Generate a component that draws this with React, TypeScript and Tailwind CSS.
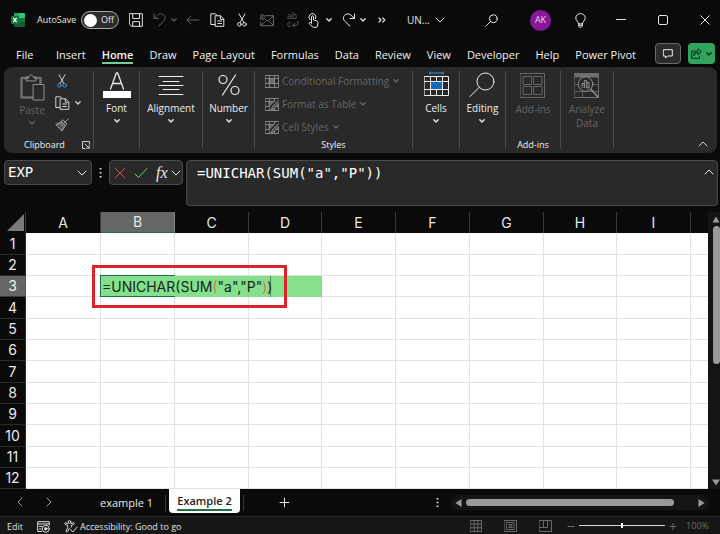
import React from "react";

type IconProps = {
  w: number;
  h: number;
  className?: string;
  sw?: number;
  children: React.ReactNode;
};

function Icon({ w, h, className = "", sw = 1, children }: IconProps) {
  return (
    <svg
      width={w}
      height={h}
      viewBox={`0 0 ${w} ${h}`}
      fill="none"
      stroke="currentColor"
      strokeWidth={sw}
      strokeLinecap="round"
      strokeLinejoin="round"
      aria-hidden="true"
      className={`shrink-0 ${className}`}
    >
      {children}
    </svg>
  );
}

const ChevronSmall = ({ className = "" }: { className?: string }) => (
  <Icon w={6} h={4} sw={1.3} className={className}>
    <path d="M0.8 0.8L3 3L5.2 0.8" />
  </Icon>
);

const ChevronLarge = ({ className = "" }: { className?: string }) => (
  <Icon w={10} h={6} className={className}>
    <path d="M1 1L5 5L9 1" />
  </Icon>
);

const ChevronUp = () => (
  <Icon w={10} h={6}>
    <path d="M1 5L5 1L9 5" />
  </Icon>
);

const ExcelLogo = () => (
  <svg width="14" height="14" viewBox="0 0 14 14" className="shrink-0" aria-hidden="true">
    <rect x="3" y="0" width="11" height="14" rx="1" fill="#185c37" />
    <rect x="3" y="0" width="6" height="5" fill="#21a366" />
    <rect x="8" y="0" width="6" height="5" rx="1" fill="#33c481" />
    <rect x="8" y="5" width="6" height="4" fill="#107c41" />
    <rect x="0" y="3" width="8" height="8" rx="1" fill="#0f7a3f" />
    <path d="M2.3 4.8L5.7 9.2M5.7 4.8L2.3 9.2" stroke="#fff" strokeWidth="1.3" />
  </svg>
);

const CopyIcon = () => (
  <Icon w={15} h={14}>
    <path d="M5 11.5H0.8V0.8H5.5L7 2.3" />
    <path d="M5.5 2.8H10.5L13.8 6V13.3H5.5Z" />
    <path d="M10.3 3V6.3H13.5M7.8 8H11.5M7.8 10.5H11.5" />
  </Icon>
);

const Scissors = ({ ring = "currentColor" }: { ring?: string }) => (
  <Icon w={10} h={14}>
    <path d="M2 0.8L7 9.7M8 0.8L3 9.7" />
    <circle cx="2.4" cy="11.3" r="1.8" stroke={ring} />
    <circle cx="7.6" cy="11.3" r="1.8" stroke={ring} />
  </Icon>
);

function TitleBar() {
  return (
    <header className="flex h-10 items-center justify-between pl-[11px] text-[#e6e6e6]">
      <div className="flex items-center">
        <ExcelLogo />
        <label htmlFor="autosave" className="ml-3 w-[44px] whitespace-nowrap text-[9px]">
          AutoSave
        </label>
        <span className="relative flex h-[18px] w-[38px] items-center rounded-full border border-[#a8a8a8] bg-[#2b2b2b] pl-[2px]">
          <input
            id="autosave"
            type="checkbox"
            role="switch"
            className="absolute inset-0 m-0 h-full w-full cursor-pointer appearance-none"
          />
          <span className="h-[13px] w-[13px] rounded-full bg-white" />
          <span className="ml-1 text-[9px]">Off</span>
        </span>
        <button type="button" aria-label="Save" className="ml-[10px]">
          <Icon w={14} h={14}>
            <path d="M0.7 0.7H13.3V13.3H2.7L0.7 11.5Z" />
            <path d="M3.7 0.7V5.5H10.5V0.7M3.7 13.3V8.7H10.5V13.3" />
          </Icon>
        </button>
        <button type="button" aria-label="Undo" className="ml-[10px] flex items-center gap-1 text-[#5c5c5c]">
          <Icon w={14} h={14}>
            <path d="M1 1V5.5H5.5M1.2 5.3L4.5 2.2C6.8 0 10.6 0.7 11.7 3.4C12.5 5.2 12 7 10.7 8.2L5.5 13.2" />
          </Icon>
          <ChevronSmall />
        </button>
        <button type="button" aria-label="Back" className="ml-[9px] text-[#5c5c5c]">
          <Icon w={14} h={10}>
            <path d="M13 5H1M5 1L1 5L5 9" />
          </Icon>
        </button>
        <button type="button" aria-label="Copy" className="ml-[10px]">
          <CopyIcon />
        </button>
        <button type="button" aria-label="Cut" className="ml-3">
          <Scissors />
        </button>
        <button type="button" aria-label="Email" className="ml-[13px] text-[#6a6a6a]">
          <Icon w={14} h={13}>
            <path d="M5.5 1.7H13.4V11.7H0.7V8" />
            <path d="M0.9 11.5L5 8M13.2 2L8 7L5.5 5.7M13.3 11.5L9.5 7.5" />
            <path d="M0.7 5.5V2.3A1.7 1.7 0 0 1 4.1 2.3V5A1 1 0 0 1 2.2 5V2.7" />
          </Icon>
        </button>
        <button
          type="button"
          aria-label="Replace"
          className="ml-[13px] flex w-[12px] flex-col text-left font-['Liberation_Sans',sans-serif] text-[9px] leading-[9px] text-[#5c5c5c]"
        >
          <span className="h-2">ab</span>
          <span className="flex items-center">
            c
            <Icon w={7} h={7}>
              <path d="M5.8 0.5V2.5C5.8 3.8 5 4.3 4 4.3H1M2.7 2.4L0.8 4.3L2.7 6.2" />
            </Icon>
          </span>
        </button>
        <button type="button" aria-label="Touch mode" className="ml-[9px] flex items-center gap-[7px]">
          <Icon w={11} h={15}>
            <path d="M2 6.6A3.5 3.5 0 1 1 7.6 5.6" />
            <path d="M3.5 10V3.8A1 1 0 0 1 5.5 3.8V7L9 8C10 8.3 10.2 8.8 10 9.8L9.4 13.2C9.2 14 8.8 14.3 8 14.3H5.6C4.6 14.3 4.3 13.8 3.7 13L1 10.3C1.3 9.2 2.5 9.2 3.5 10Z" />
          </Icon>
          <ChevronSmall />
        </button>
        <button type="button" aria-label="Redo" className="ml-[10px] flex items-center gap-1">
          <Icon w={14} h={14}>
            <path d="M12.5 1V5.5H8M12.3 5.3L9 2.2C6.7 0 2.9 0.7 1.8 3.4C1 5.2 1.5 7 2.8 8.2L8 13.2" />
          </Icon>
          <ChevronSmall />
        </button>
        <button type="button" aria-label="Customize toolbar" className="ml-3">
          <Icon w={8} h={6} sw={1.2}>
            <path d="M1 1L3 3L1 5M4.8 1L6.8 3L4.8 5" />
          </Icon>
        </button>
        <button type="button" className="ml-[21px] flex items-center gap-[5px] text-[10px]">
          UN...
          <ChevronLarge />
        </button>
      </div>
      <div className="flex items-center pr-[10px]">
        <button type="button" aria-label="Search">
          <Icon w={13} h={13}>
            <circle cx="8.3" cy="4.7" r="3.9" />
            <path d="M5.5 7.5L0.8 12.2" />
          </Icon>
        </button>
        <button
          type="button"
          className="ml-8 h-[21px] w-[21px] rounded-full bg-[#881798] text-center text-[9px] text-[#ecd5ee]"
        >
          AK
        </button>
        <button type="button" aria-label="Tips" className="ml-6">
          <Icon w={11} h={15}>
            <path d="M3.5 10.5C3.5 8.5 0.8 7.8 0.8 5A4.6 4.3 0 0 1 10.2 5C10.2 7.8 7.5 8.5 7.5 10.5ZM3.6 12.2H7.4M3.8 10.5V13.2L4.6 14.2H6.4L7.2 13.2V10.5" />
          </Icon>
        </button>
        <button type="button" aria-label="Minimize" className="ml-[30px]">
          <Icon w={10} h={10}>
            <path d="M0.5 4.5H9.5" />
          </Icon>
        </button>
        <button type="button" aria-label="Maximize" className="ml-8">
          <Icon w={10} h={10}>
            <rect x="0.5" y="0.5" width="9" height="9" rx="1.5" />
          </Icon>
        </button>
        <button type="button" aria-label="Close" className="ml-8">
          <Icon w={10} h={10}>
            <path d="M0.7 0.7L9.3 9.3M9.3 0.7L0.7 9.3" />
          </Icon>
        </button>
      </div>
    </header>
  );
}

const ribbonTabs = [
  "Insert",
  "Home",
  "Draw",
  "Page Layout",
  "Formulas",
  "Data",
  "Review",
  "View",
  "Developer",
  "Help",
  "Power Pivot",
];

function RibbonTabs() {
  return (
    <nav className="flex h-[27px] items-start justify-between pl-4 pr-[5px] text-[11px] text-[#f0f0f0]">
      <div className="flex pt-[6px]">
        <button type="button" className="flex h-[18px] w-10 items-center">
          File
        </button>
        <div className="flex w-[580px] justify-between">
          {ribbonTabs.map((t) =>
            t === "Home" ? (
              <button
                key={t}
                type="button"
                className="flex h-[18px] items-center border-b-2 border-[#6fcf97] pt-[2px] font-semibold"
              >
                {t}
              </button>
            ) : (
              <button key={t} type="button" className="flex h-[18px] items-center whitespace-nowrap">
                {t}
              </button>
            ),
          )}
        </div>
      </div>
      <div className="flex gap-[7px] pt-[3px]">
        <button
          type="button"
          aria-label="Comments"
          className="flex h-[21px] w-[26px] items-center justify-center rounded border border-[#6b6b6b] bg-[#2b2b2b]"
        >
          <Icon w={10} h={10}>
            <path d="M0.7 0.7H9.3V7H4.5L2.5 9V7H0.7Z" />
          </Icon>
        </button>
        <button
          type="button"
          aria-label="Share"
          className="flex h-[21px] w-[27px] items-center justify-center gap-1 rounded bg-[#33a45f] text-[#0b2e1a]"
        >
          <Icon w={11} h={11}>
            <path d="M3.5 3H0.7V10.3H8.5V8" />
            <path d="M2.8 7.5C3 5.5 4.5 4.6 7 4.6V6.8L10.3 3.6L7 0.8V2.8C4.3 3 2.8 4.5 2.8 7.5Z" />
          </Icon>
          <ChevronSmall />
        </button>
      </div>
    </nav>
  );
}

function Group({ width, children, label }: { width: string; children: React.ReactNode; label?: string }) {
  return (
    <section className={`flex shrink-0 flex-col items-center border-r border-[#4a4a4a] ${width}`}>
      {children}
      {label && <span className="mt-auto text-[9px] leading-[9px] text-[#f0f0f0]">{label}</span>}
    </section>
  );
}

function BigButton({
  icon,
  label,
  dim,
  chevron = true,
}: {
  icon: React.ReactNode;
  label: React.ReactNode;
  dim?: boolean;
  chevron?: boolean;
}) {
  return (
    <button type="button" className={`flex flex-col items-center ${dim ? "text-[#666666]" : "text-[#ededed]"}`}>
      <span className="flex h-7 items-center">{icon}</span>
      <span className={`text-[10px] leading-[14px] ${dim ? "pt-[3px]" : "pt-[2px]"}`}>{label}</span>
      {chevron && <ChevronSmall className="mt-1" />}
    </button>
  );
}

const PasteIcon = () => (
  <Icon w={25} h={27} className="text-[#8f8f8f]">
    <path d="M8 4H1.5V23.5H12" strokeWidth="2.4" stroke="#6e6e6e" />
    <path d="M15 4H20.5V9" strokeWidth="2.4" stroke="#6e6e6e" />
    <path d="M6 6.5V3H9C9 0.3 13 0.3 13 3H16V6.5Z" />
    <rect x="13.5" y="10.5" width="10.5" height="15.5" fill="#292929" />
  </Icon>
);

const BrushIcon = () => (
  <Icon w={14} h={14} className="text-[#a0a0a0]">
    <path d="M13.2 0.8L9.5 4.5M6.5 3.5L10.5 7.5L12 6L8 2Z" />
    <path d="M6.3 3.8L0.8 6.5L7 13L10.3 7.7Z" fill="#6a6a6a" />
    <path d="M3 8.7L5 7.5M5 10.8L7 9" stroke="#292929" />
  </Icon>
);

function StyleIcon({ brush }: { brush?: boolean }) {
  return (
    <Icon w={14} h={13} className="text-[#858585]">
      <rect x="0.5" y="0.5" width="13" height="12" />
      <path d="M0.5 3.5H13.5M0.5 8.5H13.5M4.5 0.5V12.5M9.5 0.5V12.5" />
      <rect x="4.5" y="3.5" width="5" height="5" fill="#6e6e6e" />
      {brush && (
        <>
          <path d="M13 3L6.5 9.5" stroke="#292929" strokeWidth="4" />
          <path d="M13.2 2.7L7.5 8.7L6 12.3L9.5 10.7L13.5 6" fill="#555" />
        </>
      )}
    </Icon>
  );
}

function Ribbon() {
  return (
    <div className="mx-1 mr-[3px] flex h-[86px] rounded-lg bg-[#292929] py-1">
      <Group width="w-[90px]">
        <div className="flex w-full">
          <button type="button" className="ml-4 mt-[3px] flex w-6 flex-col items-center text-[#666666]">
            <PasteIcon />
            <span className="pt-[2px] text-[10px] leading-[14px]">Paste</span>
            <ChevronSmall className="mt-1" />
          </button>
          <div className="ml-[11px] flex flex-col gap-2 pt-[3px] text-[#d0d0d0]">
            <button type="button" aria-label="Cut" className="ml-[2px] w-[10px]">
              <Scissors ring="#3a96dd" />
            </button>
            <button type="button" aria-label="Copy" className="flex items-center gap-[5px]">
              <CopyIcon />
              <ChevronSmall />
            </button>
            <button type="button" aria-label="Format Painter" className="w-[14px]">
              <BrushIcon />
            </button>
          </div>
        </div>
        <div className="mt-auto flex w-full items-center justify-between pl-5 pr-[3px]">
          <span className="text-[9px] leading-[9px] text-[#f0f0f0]">Clipboard</span>
          <button type="button" aria-label="Clipboard options" className="text-[#d0d0d0]">
            <Icon w={8} h={8}>
              <path d="M7.5 3V0.5H0.5V7.5H3M3 3L7 7M7.2 4.5V7.2H4.5" />
            </Icon>
          </button>
        </div>
      </Group>
      <Group width="w-[46px]">
        <BigButton
          label="Font"
          icon={
            <Icon w={28} h={28}>
              <path d="M7.5 18L13.3 2H14.7L20.5 18M9.5 12.5H18.5" strokeWidth="1.3" />
              <rect x="0" y="20" width="28" height="7" fill="#fff" stroke="none" />
            </Icon>
          }
        />
      </Group>
      <Group width="w-[63px]">
        <BigButton
          label="Alignment"
          icon={
            <Icon w={26} h={28}>
              <path d="M1 5.5H25M5 10.5H21M1 14.5H25M5 18.5H21M1 23.5H25" />
            </Icon>
          }
        />
      </Group>
      <Group width="w-[52px]">
        <BigButton
          label="Number"
          icon={
            <Icon w={24} h={28} sw={1.2}>
              <circle cx="6" cy="8.5" r="4" />
              <circle cx="18" cy="19.5" r="4" />
              <path d="M18.5 4L5.5 24" />
            </Icon>
          }
        />
      </Group>
      <Group width="w-[158px]" label="Styles">
        <div className="flex w-full flex-col gap-[7px] pl-[10px] pt-[2px] text-[10px] text-[#666666]">
          {["Conditional Formatting", "Format as Table", "Cell Styles"].map((s, i) => (
            <button key={s} type="button" className="flex h-4 items-center whitespace-nowrap leading-4">
              <StyleIcon brush={i > 0} />
              <span className="ml-[3px] mr-1">{s}</span>
              <ChevronSmall />
            </button>
          ))}
        </div>
      </Group>
      <Group width="w-[47px]">
        <BigButton
          label="Cells"
          icon={
            <Icon w={25} h={28}>
              <path d="M6 2H19M6 0.8V3.2M19 0.8V3.2" stroke="#3a96dd" />
              <rect x="0.5" y="5.5" width="24" height="19" />
              <path d="M0.5 10.5H24.5M0.5 18.5H24.5M6.5 5.5V24.5M18.5 5.5V24.5M12.5 5.5V10M12.5 19V24.5" />
              <rect x="7" y="11" width="11" height="7" fill="#0f6cbd" stroke="none" />
            </Icon>
          }
        />
      </Group>
      <Group width="w-[46px]">
        <BigButton
          label="Editing"
          icon={
            <Icon w={28} h={28}>
              <circle cx="17.5" cy="10.5" r="8.5" />
              <path d="M11 16.5L2 25.5" />
            </Icon>
          }
        />
      </Group>
      <Group width="w-[55px]" label="Add-ins">
        <BigButton
          dim
          chevron={false}
          label="Add-ins"
          icon={
            <Icon w={25} h={26}>
              <rect x="0.5" y="1.5" width="24" height="24" />
              <rect x="3.5" y="4.5" width="8" height="8" />
              <rect x="14" y="4.5" width="8" height="8" />
              <rect x="3.5" y="14.5" width="8" height="8" />
              <rect x="14" y="14.5" width="8" height="8" />
            </Icon>
          }
        />
      </Group>
      <Group width="w-[53px]">
        <BigButton
          dim
          chevron={false}
          label={
            <>
              Analyze
              <br />
              Data
            </>
          }
          icon={
            <Icon w={25} h={26} className="text-[#8f8f8f]">
              <rect x="0.5" y="1.5" width="24" height="24" stroke="#6e6e6e" />
              <rect x="0.5" y="1.5" width="24" height="4" fill="#6e6e6e" stroke="none" />
              <path d="M0.5 12.5H24.5M0.5 19.5H24.5M8.5 5.5V25.5" stroke="#5f5f5f" />
              <circle cx="11.5" cy="12" r="7.3" fill="#292929" />
              <path d="M17 17.5L24 25" strokeWidth="1.6" />
              <path d="M8 15.5V11.5H10.3V15.5M10.3 15.5V8.5H12.7V15.5M12.7 15.5V10.5H15V15.5Z" />
            </Icon>
          }
        />
      </Group>
      <div className="flex grow items-end justify-end pb-[2px] pr-[9px] text-[#d0d0d0]">
        <button type="button" aria-label="Collapse ribbon">
          <ChevronUp />
        </button>
      </div>
    </div>
  );
}

function FormulaBar() {
  return (
    <div className="flex h-[59px] items-start pl-1 pr-[2px] pt-[7px] text-[#e8e8e8]">
      <div className="flex h-[25px] w-[88px] items-center rounded border border-[#4a4a4a] bg-[#292929] pr-1">
        <input
          aria-label="Name box"
          defaultValue="EXP"
          className="w-full min-w-0 bg-transparent pl-[3px] font-['DejaVu_Sans_Mono',monospace] text-[14px] text-white outline-none"
        />
        <ChevronLarge />
      </div>
      <Icon w={3} h={25} className="mx-[7px]">
        <path d="M1.5 8V9.5M1.5 12V13.5M1.5 16V17.5" strokeWidth="1.8" strokeLinecap="butt" />
      </Icon>
      <div className="flex h-[25px] w-[74px] shrink-0 items-center rounded border border-[#4a4a4a] bg-[#292929] pl-1">
        <button type="button" aria-label="Cancel" className="text-[#d9534f]">
          <Icon w={12} h={12}>
            <path d="M1 1L11 11M11 1L1 11" />
          </Icon>
        </button>
        <button type="button" aria-label="Enter" className="ml-2 text-[#6fcf7c]">
          <Icon w={14} h={12}>
            <path d="M1 7L4.5 10.5L13 1.5" />
          </Icon>
        </button>
        <button
          type="button"
          className="ml-2 flex items-center gap-[3px] font-['Liberation_Serif',serif] text-[16px] italic leading-4"
        >
          fx
          <ChevronLarge className="-mr-1" />
        </button>
      </div>
      <div className="ml-[3px] flex h-[46px] grow items-start rounded border border-[#4a4a4a] bg-[#292929] pr-[3px]">
        <textarea
          aria-label="Formula bar"
          defaultValue={'=UNICHAR(SUM("a","P"))'}
          spellCheck={false}
          className="h-full grow resize-none bg-transparent pl-[10px] pt-[2px] font-['DejaVu_Sans_Mono',monospace] text-[14px] leading-5 text-white outline-none"
        />
        <button type="button" aria-label="Collapse formula bar" className="pt-2">
          <ChevronUp />
        </button>
      </div>
    </div>
  );
}

const columns = [
  { name: "A", width: "w-[75px]" },
  { name: "B", width: "w-[74px]" },
  { name: "C", width: "w-[74px]" },
  { name: "D", width: "w-[73px]" },
  { name: "E", width: "w-[74px]" },
  { name: "F", width: "w-[74px]" },
  { name: "G", width: "w-[74px]" },
  { name: "H", width: "w-[73px]" },
  { name: "I", width: "w-[74px]" },
];
const rows = Array.from({ length: 12 }, (_, i) => i + 1);

function CellEditor() {
  return (
    <>
      <div
        role="textbox"
        aria-label="Cell B3"
        contentEditable
        suppressContentEditableWarning
        spellCheck={false}
        className="absolute left-0 top-0 z-10 h-[21px] w-[170px] whitespace-nowrap border-r border-[#4c8a5a] bg-[#85e08c] pl-px text-[14px] leading-[21px] text-[#16251a] outline-none"
      >
        =UNICHAR(SUM<span className="text-[#e0734f]">(</span>"a","P"
        <span className="text-[#e0734f]">)</span>)
      </div>
      <div className="pointer-events-none absolute -left-px -top-px z-20 h-[22px] w-[75px] border border-r-0 border-[#1e7145]" />
      <div className="pointer-events-none absolute -left-[9px] -top-[11px] z-20 h-[43px] w-[195px] border-[3px] border-[#d8232a]" />
    </>
  );
}

function Sheet() {
  return (
    <main className="flex">
      <table className="grow table-fixed border-separate border-spacing-0 bg-white font-['Inter',sans-serif]">
        <colgroup>
          <col className="w-[26px]" />
          {columns.map((c) => (
            <col key={c.name} className={c.width} />
          ))}
          <col />
        </colgroup>
        <thead>
          <tr className="h-[21px] bg-[#0a0a0a] text-[14px] leading-5 text-[#e8e8e8]">
            <th className="border-r border-[#3a3a3a] p-0">
              <Icon w={17} h={17} className="ml-[7px]">
                <path d="M17 0V17H0Z" fill="#7a7a7a" stroke="none" />
              </Icon>
            </th>
            {columns.map(({ name }) => (
              <th
                key={name}
                scope="col"
                className={
                  name === "B"
                    ? "border-b border-r border-b-[#1e7145] border-r-[#8a8a8a] bg-[#666666] p-0 font-normal"
                    : "border-r border-[#3a3a3a] p-0 pt-px font-normal"
                }
              >
                {name}
              </th>
            ))}
            <th className="p-0" />
          </tr>
        </thead>
        <tbody>
          {rows.map((r) => (
            <tr key={r} className={r % 3 === 1 ? "h-[22px]" : "h-[21px]"}>
              <th
                scope="row"
                className={
                  r === 3
                    ? "border-b border-r border-b-[#3a3a3a] border-r-[#1e7145] bg-[#666666] p-0 text-[14px] font-normal leading-5 text-[#f0f0f0]"
                    : "border-b border-r border-[#2a2a2a] bg-[#0a0a0a] p-0 text-[14px] font-normal leading-5 text-[#e8e8e8]"
                }
              >
                {r}
              </th>
              {columns.map(({ name }) => {
                if (r === 3 && name === "B")
                  return (
                    <td key={name} className="relative bg-[#85e08c] p-0 leading-5">
                      <CellEditor />
                    </td>
                  );
                if (r === 3 && (name === "C" || name === "D"))
                  return <td key={name} className="bg-[#85e08c] p-0" />;
                return <td key={name} className="border-b border-r border-[#e2e2e2] p-0" />;
              })}
              <td className="border-b border-[#e2e2e2] p-0" />
            </tr>
          ))}
        </tbody>
      </table>
      <div className="flex w-3 shrink-0 flex-col items-end bg-[#141414] pt-1 text-[#9a9a9a]">
        <Icon w={8} h={7}>
          <path d="M0.5 6.5L4 0.5L7.5 6.5Z" fill="currentColor" stroke="none" />
        </Icon>
        <div className="mt-[3px] h-[138px] w-[7px] rounded-full bg-[#9a9a9a]" />
        <Icon w={8} h={7} className="mb-[3px] mt-auto">
          <path d="M0 0.5L4 6.5L8 0.5Z" fill="currentColor" stroke="none" />
        </Icon>
      </div>
    </main>
  );
}

function SheetTabs() {
  return (
    <div className="flex h-[27px] items-start justify-between pr-[11px] text-[11px] text-[#e8e8e8]">
      <div className="flex items-start">
        <button type="button" aria-label="Previous sheet" className="ml-[17px] mt-2 text-[#a0a0a0]">
          <Icon w={6} h={10}>
            <path d="M5 1L1 5L5 9" />
          </Icon>
        </button>
        <button type="button" aria-label="Next sheet" className="ml-[23px] mt-2 text-[#a0a0a0]">
          <Icon w={6} h={10}>
            <path d="M1 1L5 5L1 9" />
          </Icon>
        </button>
        <button type="button" className="ml-9 mt-[6px] w-[78px] border-r border-[#3a3a3a] text-center">
          example 1
        </button>
        <button
          type="button"
          className="ml-[3px] flex h-6 w-[71px] justify-center rounded-b bg-white font-semibold text-[#222]"
        >
          <span className="mt-1 h-[18px] whitespace-nowrap border-b-2 border-[#1e7145]">Example 2</span>
        </button>
        <span className="ml-[3px] mt-[6px] h-4 w-px bg-[#3a3a3a]" />
        <button type="button" aria-label="New sheet" className="ml-[35px] mt-2">
          <Icon w={11} h={11}>
            <path d="M5.5 1V10M1 5.5H10" />
          </Icon>
        </button>
      </div>
      <div className="flex items-center pt-[6px]">
        <Icon w={3} h={11}>
          <path d="M1.5 1V2.5M1.5 4.7V6.2M1.5 8.5V10" strokeWidth="1.8" strokeLinecap="butt" />
        </Icon>
        <div className="ml-3 flex h-[15px] w-[258px] items-center rounded-full bg-[#141414] px-1 text-[#9a9a9a]">
          <Icon w={7} h={8}>
            <path d="M6.5 0L0.5 4L6.5 8Z" fill="currentColor" stroke="none" />
          </Icon>
          <div className="ml-1 h-[7px] w-[208px] rounded-full bg-[#9a9a9a]" />
          <Icon w={7} h={8} className="ml-auto">
            <path d="M0.5 0L6.5 4L0.5 8Z" fill="currentColor" stroke="none" />
          </Icon>
        </div>
      </div>
    </div>
  );
}

function StatusBar() {
  return (
    <footer className="flex h-[18px] items-center justify-between border-t border-[#2a2a2a] bg-[#161616] pl-[7px] pr-[11px] text-[9px] text-[#e0e0e0]">
      <div className="flex items-center pt-[2px]">
        <span className="w-[30px]">Edit</span>
        <button type="button" aria-label="Record macro">
          <Icon w={13} h={12}>
            <path d="M4.5 10.5H0.7V0.7H12.3V4M0.7 3H12.3M2.5 5.5H5M2.5 8H4" />
            <circle cx="8.8" cy="7.8" r="3.5" />
            <circle cx="8.8" cy="7.8" r="1.2" fill="currentColor" />
          </Icon>
        </button>
        <button type="button" className="ml-[14px] flex items-center gap-[2px] whitespace-nowrap">
          <Icon w={14} h={13}>
            <circle cx="5.5" cy="2" r="1.4" />
            <path d="M3.8 3.7L1.6 2.7C0.6 2.7 0.5 4 1.3 4.4L3.7 5.5V7.5L2 11.2C2 12.2 3.3 12.3 3.6 11.6L5.3 8.5M7.2 3.7L9.4 2.7C10.4 2.7 10.5 4 9.7 4.4L7.3 5.5V7" />
            <path d="M6.5 9.5L8.8 12L13.2 7" />
          </Icon>
          Accessibility: Good to go
        </button>
      </div>
      <div className="flex items-center text-[#6a6a6a]">
        <button type="button" aria-label="Normal view">
          <Icon w={12} h={12}>
            <path d="M0.5 0.5H11.5V11.5H0.5ZM0.5 4H11.5M0.5 7.8H11.5M4.2 0.5V11.5M7.8 0.5V11.5" />
          </Icon>
        </button>
        <button type="button" aria-label="Page layout view" className="ml-[22px]">
          <Icon w={13} h={12}>
            <path d="M0.5 0.5H12.5V11.5H0.5ZM3 2.5H10V9.5H3ZM5 4.5H8M5 6H8M5 7.5H8" />
          </Icon>
        </button>
        <button type="button" aria-label="Page break view" className="ml-[22px]">
          <Icon w={13} h={12}>
            <path d="M0.5 0.5H12.5V11.5H0.5ZM0.5 7.5H4.5V0.5M4.5 7.5H8.5V0.5" />
          </Icon>
        </button>
        <button type="button" aria-label="Zoom out" className="ml-[15px]">
          <Icon w={8} h={8}>
            <path d="M1 4.5H7" />
          </Icon>
        </button>
        <input
          type="range"
          aria-label="Zoom"
          min={10}
          max={190}
          defaultValue={100}
          className="mx-1 h-[6px] w-[86px] appearance-none bg-[linear-gradient(#d8d8d8,#d8d8d8)] bg-[length:100%_1px] bg-center bg-no-repeat [&::-webkit-slider-thumb]:h-[5px] [&::-webkit-slider-thumb]:w-[2px] [&::-webkit-slider-thumb]:appearance-none [&::-webkit-slider-thumb]:bg-white"
        />
        <button type="button" aria-label="Zoom in">
          <Icon w={8} h={8}>
            <path d="M1 4.5H7M4 1.5V7.5" />
          </Icon>
        </button>
        <span className="ml-2 w-[24px] text-right">100%</span>
      </div>
    </footer>
  );
}

export default function App() {
  return (
    <div className="min-w-[720px] overflow-hidden bg-[#0a0a0a] font-['Open_Sans',sans-serif]">
      <TitleBar />
      <RibbonTabs />
      <Ribbon />
      <FormulaBar />
      <Sheet />
      <SheetTabs />
      <StatusBar />
    </div>
  );
}
